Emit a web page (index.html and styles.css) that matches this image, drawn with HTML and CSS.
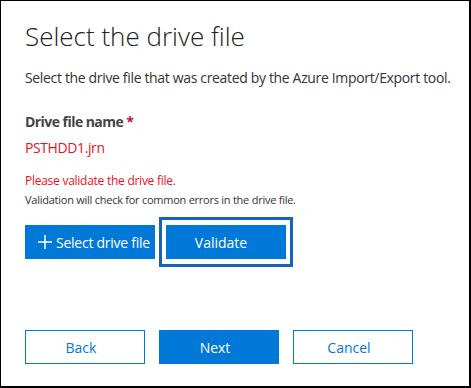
FILE: index.html
```html
<!DOCTYPE html>
<html>
<head>
<meta charset="utf-8">
<link rel="stylesheet" href="styles.css">
</head>
<body>
<div class="dialog">
  <h1 class="title">Select the drive file</h1>
  <p class="intro">Select the drive file that was created by the Azure Import/Export tool.</p>
  <div class="field-label">Drive file name <span class="req">*</span></div>
  <div class="file-name">PSTHDD1.jrn</div>
  <div class="error">Please validate the drive file.</div>
  <div class="hint">Validation will check for common errors in the drive file.</div>
  <div class="actions">
    <button class="btn btn-primary btn-select"><svg class="plus" width="14" height="14" viewBox="0 0 14 14"><path d="M7 0V14M0 7H14" stroke="#fff" stroke-width="1.5" fill="none"/></svg><span>Select drive file</span></button>
    <div class="focus-ring"><button class="btn btn-primary btn-validate">Validate</button></div>
  </div>
  <div class="footer">
    <button class="btn btn-outline">Back</button>
    <button class="btn btn-primary">Next</button>
    <button class="btn btn-outline">Cancel</button>
  </div>
</div>
</body>
</html>
```
FILE: styles.css
```css
* { box-sizing: border-box; }
html, body { margin: 0; padding: 0; background: #fff; }
body { font-family: "Open Sans", "Noto Sans", sans-serif; color: #333; }
.dialog {
  width: 471px;
  height: 388px;
  border-style: solid;
  border-color: #000;
  border-width: 1px 2px 2px 1px;
  padding: 0 0 0 24px;
  display: flex;
  flex-direction: column;
}
.title {
  margin: 17px 0 0 0;
  font-weight: 300;
  font-size: 26px;
  line-height: 36px;
  color: #222;
}
.intro {
  margin: 15px 0 0 0;
  font-size: 14px;
  line-height: 18px;
  color: #333;
  letter-spacing: -0.34px;
}
.field-label {
  margin-top: 25px;
  font-size: 14px;
  line-height: 20px;
  font-weight: 700;
  color: #444;
  letter-spacing: -0.55px;
}
.req { color: #b4162c; }
.file-name {
  margin-top: 6px;
  font-size: 14px;
  line-height: 20px;
  color: #e81123;
  letter-spacing: -0.4px;
}
.error {
  margin-top: 15px;
  font-size: 12px;
  line-height: 16px;
  color: #e81123;
  letter-spacing: -0.26px;
}
.hint {
  margin-top: 3px;
  font-size: 11px;
  line-height: 16px;
  color: #333;
  letter-spacing: -0.25px;
}
.actions {
  margin-top: 9px;
  display: flex;
  align-items: center;
  gap: 4px;
}
.btn {
  font-family: inherit;
  font-size: 14px;
  height: 34px;
  width: 120px;
  border: 1px solid #0078d7;
  padding: 0 8px 0 0;
  margin: 0;
  cursor: pointer;
}
.btn-primary { background: #0078d7; color: #fff; }
.btn-outline { background: #fff; color: #0078d7; }
.btn-select {
  width: 130px;
  display: flex;
  align-items: center;
  justify-content: flex-start;
  gap: 4px;
  padding: 0 0 0 12px;
  letter-spacing: -0.25px;
}
.plus { flex: none; }
.focus-ring {
  border: 3px solid #1664b4;
  padding: 5px 4px;
  background: #fff;
}
.btn-validate { display: block; padding-right: 10px; }
.footer {
  margin-top: 63px;
  display: flex;
  gap: 14px;
}
```
